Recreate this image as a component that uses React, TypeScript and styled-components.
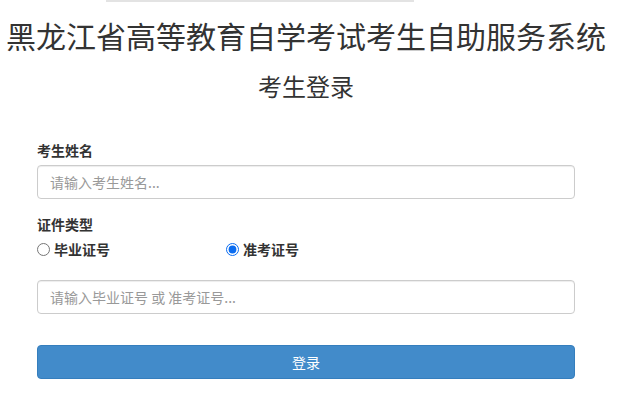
import styled, { createGlobalStyle } from 'styled-components'
import { useState } from 'react'

const GlobalStyle = createGlobalStyle`
  html, body {
    margin: 0;
    padding: 0;
    background: #fff;
  }
  body {
    font-family: "Noto Sans CJK SC", "Noto Sans", "Liberation Sans", sans-serif;
    font-size: 14px;
    color: #333;
  }
  * {
    box-sizing: border-box;
  }
`

const Page = styled.div`
  width: 612px;
`

const TopRule = styled.div`
  width: 308px;
  height: 2px;
  margin-left: 106px;
  background: #e3e3e3;
`

const Title = styled.h1`
  margin: 15px 0 0;
  font-size: 30px;
  font-weight: 400;
  line-height: 36px;
  text-align: center;
  color: #333;
  white-space: nowrap;
`

const SubTitle = styled.h3`
  margin: 19px 0 0;
  font-size: 24px;
  font-weight: 400;
  line-height: 28px;
  text-align: center;
  color: #333;
`

const Form = styled.form`
  padding: 40px 37px 0;
  width: 612px;
`

const Group = styled.div<{ $gap?: number }>`
  margin-bottom: ${(p) => p.$gap ?? 15}px;
`

const Label = styled.label`
  display: block;
  font-size: 14px;
  font-weight: 700;
  line-height: 20px;
  margin-bottom: 5px;
  color: #333;
`

const Input = styled.input`
  display: block;
  width: 100%;
  height: 34px;
  padding: 6px 12px;
  font-family: inherit;
  font-size: 14px;
  color: #555;
  background: #fff;
  border: 1px solid #ccc;
  border-radius: 4px;
  box-shadow: inset 0 1px 1px rgba(0, 0, 0, 0.075);
  outline: none;

  &::placeholder {
    color: #999;
  }
`

const RadioRow = styled.div`
  display: grid;
  grid-template-columns: 189px 189px;
`

const RadioLabel = styled.label`
  display: flex;
  align-items: center;
  gap: 4px;
  font-size: 14px;
  font-weight: 700;
  line-height: 20px;
  cursor: pointer;
`

const Radio = styled.input`
  margin: 0;
  width: 13px;
  height: 13px;
  accent-color: #0a6cf0;
`

const Button = styled.button`
  display: block;
  width: 100%;
  height: 34px;
  padding: 6px 12px;
  font-family: inherit;
  font-size: 14px;
  color: #fff;
  background: #428bca;
  border: 1px solid #357ebd;
  border-radius: 4px;
  cursor: pointer;
`

const App = () => {
  const [kind, setKind] = useState('zk')

  return (
    <Page>
      <GlobalStyle />
      <TopRule />
      <Title>黑龙江省高等教育自学考试考生自助服务系统</Title>
      <SubTitle>考生登录</SubTitle>
      <Form onSubmit={(e) => e.preventDefault()}>
        <Group>
          <Label>考生姓名</Label>
          <Input placeholder="请输入考生姓名..." />
        </Group>
        <Group $gap={21}>
          <Label>证件类型</Label>
          <RadioRow>
            <RadioLabel>
              <Radio type="radio" name="kind" checked={kind === 'by'} onChange={() => setKind('by')} />
              毕业证号
            </RadioLabel>
            <RadioLabel>
              <Radio type="radio" name="kind" checked={kind === 'zk'} onChange={() => setKind('zk')} />
              准考证号
            </RadioLabel>
          </RadioRow>
        </Group>
        <Group $gap={31}>
          <Input placeholder="请输入毕业证号 或 准考证号..." />
        </Group>
        <Button type="submit">登录</Button>
      </Form>
    </Page>
  )
}

export default App
